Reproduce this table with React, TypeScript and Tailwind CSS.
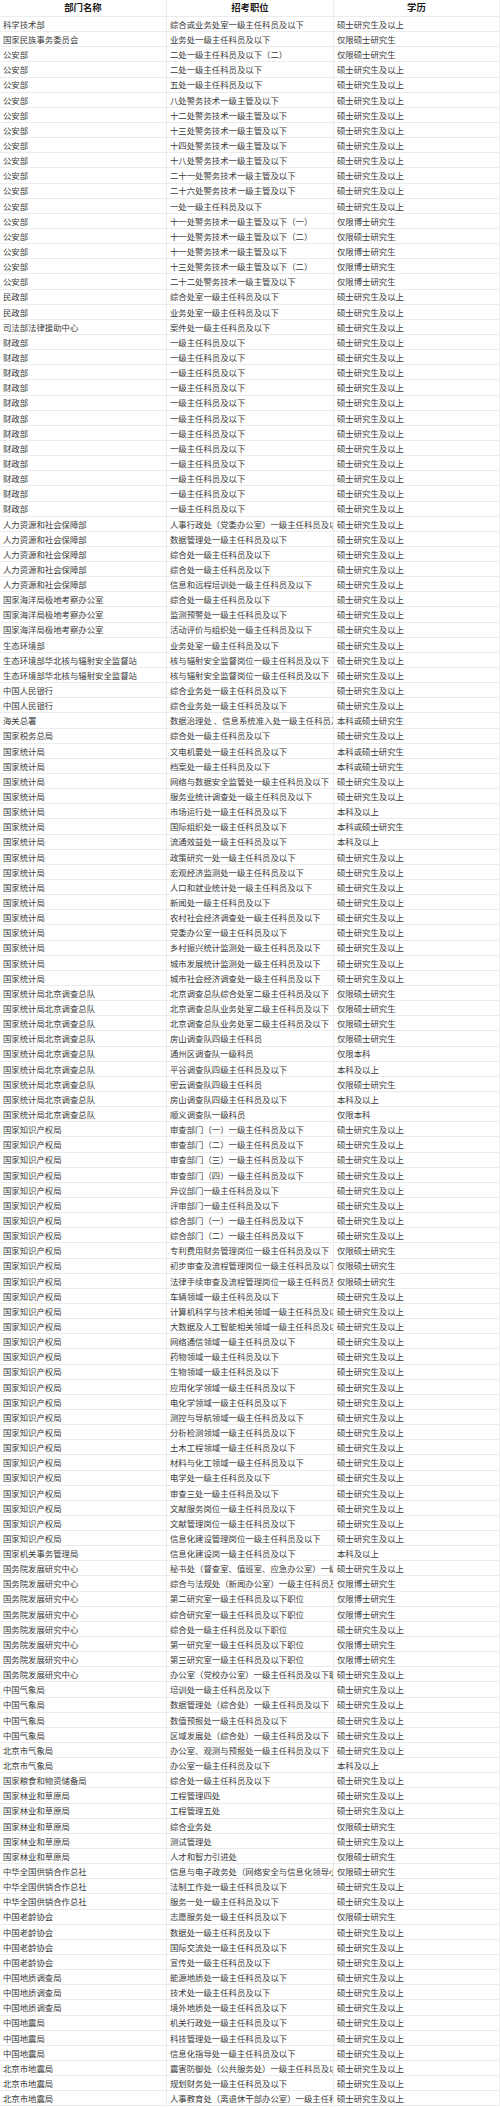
const F = "Noto Sans CJK SC";

const A = "一级主任科员及以下";
const S = "硕士研究生及以上";
const SS = "仅限硕士研究生";
const BS = "仅限博士研究生";
const BK = "本科及以上";
const BH = "本科或硕士研究生";
const GA = "公安部";
const CZ = "财政部";
const RS = "人力资源和社会保障部";
const HY = "国家海洋局极地考察办公室";
const TJ = "国家统计局";
const BJ = "国家统计局北京调查总队";
const ZS = "国家知识产权局";
const FZ = "国务院发展研究中心";
const QX = "中国气象局";
const LC = "国家林业和草原局";
const GX = "中华全国供销合作总社";
const LL = "中国老龄协会";
const DZ = "中国地质调查局";
const DD = "中国地震局";
const BD = "北京市地震局";

const rows: [string, string, string][] = [
  ["科学技术部", "综合或业务处室" + A, S],
  ["国家民族事务委员会", "业务处" + A, SS],
  [GA, "二处" + A + "（二）", SS],
  [GA, "二处" + A, S],
  [GA, "五处" + A, S],
  [GA, "八处警务技术一级主管及以下", S],
  [GA, "十二处警务技术一级主管及以下", S],
  [GA, "十三处警务技术一级主管及以下", S],
  [GA, "十四处警务技术一级主管及以下", S],
  [GA, "十八处警务技术一级主管及以下", S],
  [GA, "二十一处警务技术一级主管及以下", S],
  [GA, "二十六处警务技术一级主管及以下", S],
  [GA, "一处" + A, S],
  [GA, "十一处警务技术一级主管及以下（一）", BS],
  [GA, "十一处警务技术一级主管及以下（二）", SS],
  [GA, "十一处警务技术一级主管及以下", BS],
  [GA, "十三处警务技术一级主管及以下（二）", BS],
  [GA, "二十二处警务技术一级主管及以下", BS],
  ["民政部", "综合处室" + A, S],
  ["民政部", "业务处室" + A, S],
  ["司法部法律援助中心", "案件处" + A, S],
  ...Array.from({ length: 12 }, (): [string, string, string] => [CZ, A, S]),
  [RS, "人事行政处（党委办公室）" + A, S],
  [RS, "数据管理处" + A, S],
  [RS, "综合处" + A, S],
  [RS, "综合处" + A, S],
  [RS, "信息和远程培训处" + A, S],
  [HY, "综合处" + A, S],
  [HY, "监测预警处" + A, S],
  [HY, "活动评价与组织处" + A, S],
  ["生态环境部", "业务处室" + A, S],
  ["生态环境部华北核与辐射安全监督站", "核与辐射安全监督岗位" + A, S],
  ["生态环境部华北核与辐射安全监督站", "核与辐射安全监督岗位" + A, S],
  ["中国人民银行", "综合业务处" + A, S],
  ["中国人民银行", "综合业务处" + A, S],
  ["海关总署", "数据治理处 、信息系统准入处" + A, BH],
  ["国家税务总局", "综合处" + A, S],
  [TJ, "文电机要处" + A, BH],
  [TJ, "档案处" + A, BH],
  [TJ, "网络与数据安全监管处" + A, S],
  [TJ, "服务业统计调查处" + A, S],
  [TJ, "市场运行处" + A, BK],
  [TJ, "国际组织处" + A, BH],
  [TJ, "流通效益处" + A, BK],
  [TJ, "政策研究一处" + A, S],
  [TJ, "宏观经济监测处" + A, S],
  [TJ, "人口和就业统计处" + A, S],
  [TJ, "新闻处" + A, S],
  [TJ, "农村社会经济调查处" + A, S],
  [TJ, "党委办公室" + A, S],
  [TJ, "乡村振兴统计监测处" + A, S],
  [TJ, "城市发展统计监测处" + A, S],
  [TJ, "城市社会经济调查处" + A, S],
  [BJ, "北京调查总队综合处室二级主任科员及以下", SS],
  [BJ, "北京调查总队业务处室二级主任科员及以下", SS],
  [BJ, "北京调查总队业务处室二级主任科员及以下", SS],
  [BJ, "房山调查队四级主任科员", SS],
  [BJ, "通州区调查队一级科员", "仅限本科"],
  [BJ, "平谷调查队四级主任科员及以下", BK],
  [BJ, "密云调查队四级主任科员", SS],
  [BJ, "房山调查队四级主任科员及以下", BK],
  [BJ, "顺义调查队一级科员", "仅限本科"],
  [ZS, "审查部门（一）" + A, S],
  [ZS, "审查部门（二）" + A, S],
  [ZS, "审查部门（三）" + A, S],
  [ZS, "审查部门（四）" + A, S],
  [ZS, "异议部门" + A, S],
  [ZS, "评审部门" + A, S],
  [ZS, "综合部门（一）" + A, S],
  [ZS, "综合部门（二）" + A, S],
  [ZS, "专利费用财务管理岗位" + A, SS],
  [ZS, "初步审查及流程管理岗位" + A, SS],
  [ZS, "法律手续审查及流程管理岗位" + A, SS],
  [ZS, "车辆领域" + A, S],
  [ZS, "计算机科学与技术相关领域" + A, S],
  [ZS, "大数据及人工智能相关领域" + A, S],
  [ZS, "网络通信领域" + A, S],
  [ZS, "药物领域" + A, S],
  [ZS, "生物领域" + A, S],
  [ZS, "应用化学领域" + A, S],
  [ZS, "电化学领域" + A, S],
  [ZS, "测控与导航领域" + A, S],
  [ZS, "分析检测领域" + A, S],
  [ZS, "土木工程领域" + A, S],
  [ZS, "材料与化工领域" + A, S],
  [ZS, "电学处" + A, S],
  [ZS, "审查三处" + A, S],
  [ZS, "文献服务岗位" + A, S],
  [ZS, "文献管理岗位" + A, S],
  [ZS, "信息化建设管理岗位" + A, S],
  ["国家机关事务管理局", "信息化建设岗" + A, BK],
  [FZ, "秘书处（督查室、值班室、应急办公室）" + A, S],
  [FZ, "综合与法规处（新闻办公室）" + A, BS],
  [FZ, "第二研究室" + A + "职位", BS],
  [FZ, "综合研究室" + A + "职位", BS],
  [FZ, "综合处" + A + "职位", S],
  [FZ, "第一研究室" + A + "职位", BS],
  [FZ, "第三研究室" + A + "职位", BS],
  [FZ, "办公室（党校办公室）" + A + "职位", S],
  [QX, "培训处" + A, S],
  [QX, "数据管理处（综合处）" + A, S],
  [QX, "数值预报处" + A, S],
  [QX, "区域发展处（综合处）" + A, S],
  ["北京市气象局", "办公室、观测与预报处" + A, S],
  ["北京市气象局", "办公室" + A, BK],
  ["国家粮食和物资储备局", "综合处" + A, S],
  [LC, "工程管理四处", S],
  [LC, "工程管理五处", S],
  [LC, "综合业务处", SS],
  [LC, "测试管理处", S],
  [LC, "人才和智力引进处", SS],
  [GX, "信息与电子政务处（网络安全与信息化领导小组办公室）", SS],
  [GX, "法制工作处" + A, S],
  [GX, "服务一处" + A, S],
  [LL, "志愿服务处" + A, SS],
  [LL, "数据处" + A, S],
  [LL, "国际交流处" + A, S],
  [LL, "宣传处" + A, S],
  [DZ, "能源地质处" + A, S],
  [DZ, "技术处" + A, S],
  [DZ, "境外地质处" + A, S],
  [DD, "机关行政处" + A, S],
  [DD, "科技管理处" + A, S],
  [DD, "信息化指导处" + A, S],
  [BD, "震害防御处（公共服务处）" + A, S],
  [BD, "规划财务处" + A, S],
  [BD, "人事教育处（离退休干部办公室）" + A, S],
];

function Cell({ text }: { text: string }) {
  return (
    <div className="flex h-[15.15px] items-center overflow-hidden whitespace-nowrap border-r border-b border-[#ececec] pl-[3px] text-[8.4px] leading-none text-[#3a3a3a]">
      {text}
    </div>
  );
}

export default function App() {
  return (
    <div
      className="w-[500px] bg-white"
      style={{ fontFamily: `"${F}", "Noto Sans CJK SC", sans-serif` }}
    >
      <div className="grid grid-cols-[167px_167px_166px]">
        {["部门名称", "招考职位", "学历"].map((h) => (
          <div
            key={h}
            className="flex h-[17px] items-center justify-center border-r border-b border-[#ececec] text-[9.4px] leading-none font-bold text-[#1a1a1a]"
          >
            {h}
          </div>
        ))}
        {rows.map((r, i) => (
          <div key={i} className="contents">
            <Cell text={r[0]} />
            <Cell text={r[1]} />
            <Cell text={r[2]} />
          </div>
        ))}
      </div>
    </div>
  );
}
